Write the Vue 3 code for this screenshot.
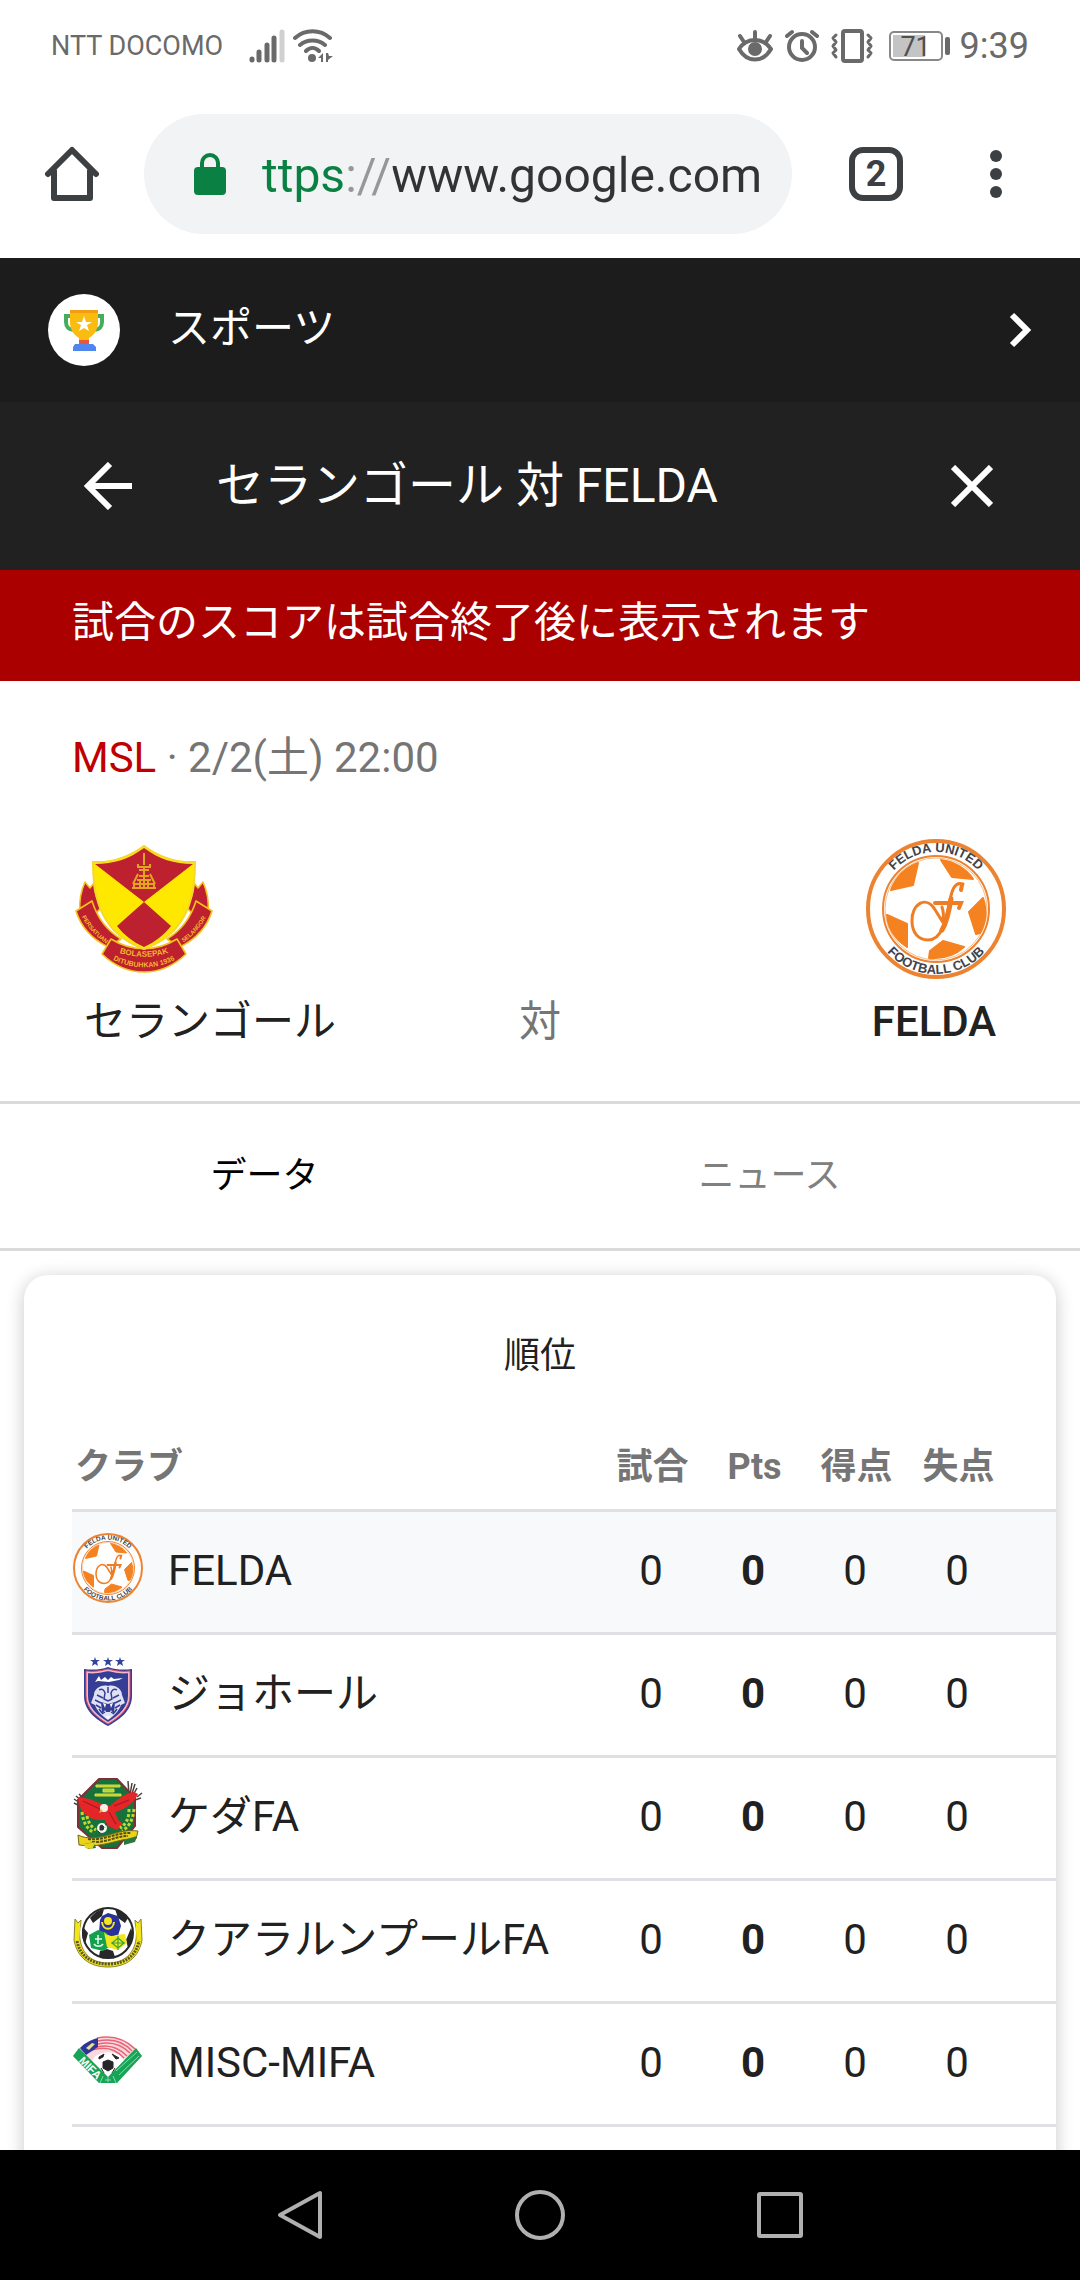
<script setup>
import { ref } from 'vue'

const url = ref('ttps://www.google.com')
const openTabs = ref(2)
const battery = ref(71)

// Tabs
const tabs = ['データ', 'ニュース']
const activeTab = ref('データ')

// Standings
const columns = ['試合', 'Pts', '得点', '失点']
const clubs = ref([
  { name: 'FELDA', crest: 'felda', stats: [0, 0, 0, 0] },
  { name: 'ジョホール', crest: 'johor', stats: [0, 0, 0, 0] },
  { name: 'ケダFA', crest: 'kedah', stats: [0, 0, 0, 0] },
  { name: 'クアラルンプールFA', crest: 'kl', stats: [0, 0, 0, 0] },
  { name: 'MISC-MIFA', crest: 'mifa', stats: [0, 0, 0, 0] }
])
</script>

<template>
  <div class="screen">
    <!-- crest drawings, used below by id -->
    <svg class="defs" aria-hidden="true">
      <symbol id="selangor" viewBox="0 0 144 144">
        <g fill="#bd202e" stroke="#f6c21c" stroke-width="1.6" stroke-linejoin="round">
          <path d="M13 45l5 6 4-5c0 9 3 17 8 24l-9 9-13-5c-1-10 1-20 5-29z" />
          <path d="M131 45l-5 6-4-5c0 9-3 17-8 24l9 9 13-5c1-10-1-20-5-29z" />
          <path d="M4 74l16-10c5 16 14 29 29 38l-13 8C20 102 9 90 4 74z" />
          <path d="M140 74l-16-10c-5 16-14 29-29 38l13 8c16-8 27-20 32-36z" />
          <path d="M39 102c21 13 45 13 66 0l9 15c-25 24-59 24-84 0z" />
        </g>
        <path d="M72 9C57 20 41 26 21 25c0 38 9 72 51 87 42-15 51-49 51-87-20 1-36-5-51-16z" fill="#ffe800" stroke="#f8d72c" stroke-width="2" />
        <path d="M72 11C57 22 42 27 23 27l49 38 49-38c-19 0-34-5-49-16z" fill="#bd202e" />
        <path d="M72 65L45 89c7 9 16 16 27 21 11-5 20-12 27-21z" fill="#bd202e" />
        <g fill="none" stroke="#e2a51f" stroke-width="2">
          <path d="M72 16v12M66 27v3h12v-3M67 33h10M66 37l-5 10M78 37l5 10M67 39h10M65 43h14M62 47h20" />
          <path d="M60 51h24M62 51v-4M68 44v7M76 44v7M72 30v20M82 51v-4" />
        </g>
        <g class="ribbon-text">
          <path id="rib-l" d="M8 76c6 13 15 24 30 33" fill="none" />
          <path id="rib-r" d="M106 109c15-9 24-20 31-34" fill="none" />
          <path id="rib-a" d="M40 113c20 9 44 9 64 0" fill="none" />
          <path id="rib-b" d="M31 116c23 19 59 19 82 0" fill="none" />
          <text font-size="6" text-anchor="middle"><textPath href="#rib-l" startOffset="50%">PERSATUAN</textPath></text>
          <text font-size="6" text-anchor="middle"><textPath href="#rib-r" startOffset="50%">SELANGOR</textPath></text>
          <text font-size="8" text-anchor="middle"><textPath href="#rib-a" startOffset="50%">BOLASEPAK</textPath></text>
          <text font-size="7" text-anchor="middle"><textPath href="#rib-b" startOffset="50%">DITUBUHKAN 1936</textPath></text>
        </g>
      </symbol>

      <symbol id="felda" viewBox="0 0 144 144">
        <circle cx="72" cy="72" r="68" fill="#fff" stroke="#ed8231" stroke-width="4" />
        <circle cx="72" cy="72" r="53" fill="none" stroke="#ed8231" stroke-width="2" />
        <circle cx="72" cy="72" r="51" fill="none" stroke="#f8bd8a" stroke-width="1" />
        <g fill="#f58220" stroke="#f58220" stroke-width="2" stroke-linejoin="round">
          <path d="M54 26l-5 22-22 5c5-13 14-22 27-27z" />
          <path d="M77 23l11 17 21 2c-7-10-18-17-32-19z" />
          <path d="M119 61l-14 14 7 22 4-1c6-11 7-23 3-35z" />
          <path d="M79 104l-13 10-1 7c13 1 25-2 35-11z" />
          <path d="M23 78l20 9v23C31 102 24 91 23 78z" />
        </g>
        <g fill="none" stroke="#ee7d23" stroke-linecap="round">
          <path d="M99 47c-8-3-11 6-13 16-4 21-8 40-22 40-10 0-16-8-16-19 0-17 13-25 22-13l8 13c2-4 2-8 0-14" stroke-width="3" />
          <path d="M98 48l-1 5M71 66h26l-2 5" stroke-width="4" />
          <path d="M87 62c-2 12-4 23-9 31" stroke-width="5" />
        </g>
        <path id="felda-top" d="M15 72a57 57 0 0 1 114 0" fill="none" />
        <path id="felda-bottom" d="M7 72a65 65 0 0 0 130 0" fill="none" />
        <g class="ring-text">
          <text><textPath href="#felda-top" startOffset="50%">FELDA UNITED</textPath></text>
          <text><textPath href="#felda-bottom" startOffset="50%">FOOTBALL CLUB</textPath></text>
        </g>
      </symbol>

      <symbol id="johor" viewBox="0 0 72 72">
        <g fill="#33429b">
          <path id="star" d="M23 2l1 3h4l-3 2 1 4-3-2-3 2 1-4-3-2h4z" />
          <use href="#star" x="13" />
          <use href="#star" x="25" />
        </g>
        <path d="M36 12c-8 3-16 3-24 2v27c0 14 11 23 24 30 13-7 24-16 24-30V14c-8 1-16 1-24-2z" fill="#353d94" />
        <path d="M36 15c-7 2-14 3-21 2v24c0 12 9 20 21 27 12-7 21-15 21-27V17c-7 1-14 0-21-2z" fill="#353d94" stroke="#f3b8c4" stroke-width="2" />
        <path d="M36 14c-7 2-15 3-22 2v25c0 12 10 21 22 28 12-7 22-16 22-28V16c-7 1-15 0-22-2z" fill="none" stroke="#dc4c6c" stroke-width="1" />
        <path d="M23 27l4-6 2 4 4-3 3 3 3-3 3 2 9-1-4 2-10 2-11-1z" fill="#fff" />
        <path d="M36 31c-7-2-14 3-14 9l-3 8 4 2c2 6 7 11 13 15 6-4 11-9 13-15l4-2-3-8c0-6-7-11-14-9z" fill="#dfe2f4" />
        <g fill="none" stroke="#353d94" stroke-width="1.5">
          <path d="M27 35c3-2 5 0 6 3l-1 6 4 2 4-2-1-6c1-3 3-5 6-3M25 40l6 3M47 40l-6 3M23 45l6 3M49 45l-6 3M24 50l5 3M48 50l-5 3M36 32v6M30 59l3-2M42 59l-3-2M27 54l3 4M45 54l-3 4" />
        </g>
        <path d="M29 47l7 2 7-2-1 12-3-4-1 2h-4l-1-2-3 4z" fill="#353d94" />
        <path d="M31 48l2 5 1-4zM41 48l-2 5-1-4zM33 61h6l-3 3z" fill="#fff" />
      </symbol>

      <symbol id="kedah" viewBox="0 0 72 72">
        <path d="M2 25l4 2M2 21l6 4M4 18l6 5M7 16l5 5M70 15l-5 4M65 10l-5 9M60 5l-2 12M56 3l1 14M69 20l-6 2M63 6l-4 13" stroke="#4b4141" stroke-width="1.5" />
        <path d="M27 1h18l18 19v28L45 70H30L6 49V22z" fill="#17713c" stroke="#7e3037" stroke-width="2" />
        <path d="M24 7h24v2H24zM31 11h11v3H31zM23 16h26v2H23z" fill="#b5d334" stroke="#d7dd3d" stroke-width="1" />
        <path d="M6 19l12 2 14 6 6 1c6-5 14-13 24-14l4 2c-4 9-12 15-23 18l3 8 5 4-6 6-9-4-3-6C18 43 7 36 6 19z" fill="#e52628" />
        <path d="M11 23l19 9M42 28l15-6M37 34l7 12" stroke="#a71822" stroke-width="1.2" />
        <circle cx="32" cy="30" r="4" fill="#f4f0e9" />
        <path d="M29 31l-2 4 4-2z" fill="#e6c538" />
        <g fill="none" stroke="#c2d82e" stroke-width="3" stroke-dasharray="3 2">
          <path d="M10 34c1 10 5 17 12 21M15 38c1 6 4 11 9 14M62 31c-1 11-5 18-12 22M57 31c0 10-3 15-9 19" />
        </g>
        <circle cx="30" cy="50" r="5" fill="#f4f4f4" />
        <path d="M28 48l2-1 2 2-1 3h-3zM26 53l2 2M33 47l2-1" fill="#333" stroke="#333" />
        <path d="M6 57c10 5 22 3 34-1 9-3 17-4 26-3l-2 8c-16-2-32 10-57 6z" fill="#ead31a" stroke="#756819" stroke-width="1" />
        <path d="M16 61c16 2 29-7 43-6M20 64c14 1 24-6 36-6" fill="none" stroke="#574d18" stroke-width="2" stroke-dasharray="3 1" />
        <path d="M52 62l13-4-2 6-11 3zM12 66l10-2 2 6-8 1z" fill="#28783f" />
        <path d="M12 66l12-2-4 7-7-1z" fill="#ead31a" />
      </symbol>

      <symbol id="kl" viewBox="0 0 72 72">
        <path d="M3 18l3 4 3-3-1 19c2 15 12 24 28 24s26-9 28-24l-1-19 3 3 3-4 1 21c-3 17-15 27-34 27S5 56 2 39z" fill="#f2e41d" stroke="#8c862a" stroke-width="1" />
        <path d="M5 40c3 15 14 23 31 23s28-8 31-23" fill="none" stroke="#5c5820" stroke-width="3" stroke-dasharray="2 1" />
        <circle cx="36" cy="32" r="28" fill="#fff" />
        <circle cx="36" cy="32" r="25" fill="#fff" stroke="#282828" stroke-width="2" />
        <path d="M18 17c4-5 8-8 14-9l-2 7-9 7zM43 8c6 1 10 5 13 9l-3 5-7-5zM11 26l5 6-3 11c-3-6-4-11-2-17zM59 27c3 7 1 14-3 20l-2-8zM28 50l7-2 6 2 2 6c-6 1-11 1-16-1z" fill="#282828" />
        <path d="M30 15l6-3 10 3 3 10-4 13-9-4-9-2 1-13z" fill="#28329a" />
        <path d="M17 34l9-5 9 3 5 12-9 6-12-3z" fill="#12a04e" />
        <path d="M32 31c3 4 7 5 12 3l9-1 2 9-9 7-11-3z" fill="#f1e71e" />
        <circle cx="36" cy="20" r="4" fill="#f4e51d" />
        <path d="M30 21c1 9 11 9 12 0" fill="none" stroke="#f4e51d" stroke-width="2" />
        <path d="M26 34v9M22 43c2 3 7 3 9 0M23 38h7" fill="none" stroke="#e7f7e9" stroke-width="1.5" />
        <path d="M46 37l6 5-6 5-6-5zM46 35v14M39 42h14" fill="none" stroke="#3ba33b" stroke-width="1.2" />
      </symbol>

      <symbol id="mifa" viewBox="0 0 72 72">
        <path d="M1 32c9-13 21-19 35-19s25 6 34 19L45 59H27z" fill="#f9d9dd" />
        <g fill="none" stroke="#e86476" stroke-width="1.5">
          <path d="M25 14c15-3 28 1 38 11M26 17c14-3 25 0 34 10M26 20c13-3 23 0 32 9M25 23c12-3 21 0 30 9M20 26c13-4 23-2 32 8" />
        </g>
        <path d="M8 24c5-5 10-8 18-10v9L14 31z" fill="#2d3696" />
        <path d="M14 24l6-5 3 1-6 6z" fill="#e9df8f" />
        <path d="M20 37c4-11 27-12 32 0L36 53z" fill="#fff" />
        <path d="M31 38l5-2 5 2v6l-5 3-5-3zM27 33l5-3-1 3-4 2zM40 30l7 4-3 1zM29 44l3 5M43 44l-3 5" fill="#262626" stroke="#262626" stroke-width="1" />
        <path d="M1 32l6-8 29 29 28-29 6 8-25 27H27z" fill="#16a457" />
        <path d="M31 52l-3 7M41 52l3 7M44 47l21-19M47 51l20-19M36 53v5M33 56h6" fill="none" stroke="#8ed8ad" stroke-width="1" />
        <path id="mifa-arc" d="M2 33l27 27" fill="none" />
        <text class="mifa-text"><textPath href="#mifa-arc" startOffset="50%">MIFA</textPath></text>
      </symbol>
    </svg>

    <header class="status-bar">
      <span class="carrier">NTT DOCOMO</span>
      <svg class="signal" width="36" height="34" viewBox="0 0 36 34">
        <g stroke="#6a6a6a" stroke-width="5" stroke-linecap="round">
          <path d="M3 30v1M10 23v8M18 16v15M25 9v22" />
          <path d="M33 3v28" stroke="#d0d0d0" />
        </g>
      </svg>
      <svg class="wifi" width="40" height="34" viewBox="0 0 40 34">
        <g fill="none" stroke="#6a6a6a" stroke-width="4" stroke-linecap="round">
          <path d="M2 9c10-9 25-9 35 0M7 16c7-6 18-6 25 0M13 22c4-4 9-4 13 0" />
        </g>
        <circle cx="19" cy="29" r="4" fill="#6a6a6a" />
        <path d="M30 24v9h-2v-4h-3zM33 24h2l1 3h4l-5 4v2h-2z" fill="#6a6a6a" />
      </svg>

      <div class="status-icons">
        <svg width="36" height="34" viewBox="0 0 36 34" fill="none" stroke="#6a6a6a" stroke-width="4" stroke-linecap="round">
          <path d="M2 20c8-12 24-12 32 0-8 14-24 14-32 0zM18 3v6M3 7l4 6M33 7l-4 6" />
          <circle cx="18" cy="20" r="5" fill="#6a6a6a" />
        </svg>
        <svg width="34" height="34" viewBox="0 0 34 34" fill="none" stroke="#6a6a6a" stroke-width="4" stroke-linecap="round">
          <circle cx="17" cy="18" r="13" />
          <path d="M17 12v7l5 5M2 7l5-4M32 7l-5-4" />
        </svg>
        <svg width="42" height="34" viewBox="0 0 42 34" fill="none" stroke="#6a6a6a" stroke-width="3" stroke-linejoin="round" stroke-linecap="round">
          <rect x="12" y="2" width="19" height="30" rx="2" stroke-width="4" />
          <path d="M5 6L2 9l3 4-3 4 3 4-3 3 3 4M37 6l3 3-3 4 3 4-3 4 3 3-3 4" />
        </svg>
        <div class="battery">
          <div class="battery-body">
            <div class="battery-fill" :style="{ width: battery + '%' }"></div>
            <span>{{ battery }}</span>
          </div>
          <i class="battery-nub"></i>
        </div>
        <time class="clock">9:39</time>
      </div>
    </header>

    <div class="toolbar">
      <button class="icon-btn" aria-label="ホーム">
        <svg width="56" height="56" viewBox="0 0 56 56" fill="none" stroke="#3c4043" stroke-width="6" stroke-linecap="round" stroke-linejoin="round">
          <path d="M4 28L28 4l24 24M10 25v27h36V25" />
        </svg>
      </button>
      <label class="address">
        <svg width="32" height="42" viewBox="0 0 32 42">
          <rect y="14" width="32" height="28" rx="4" fill="#0b8043" />
          <path d="M8 16v-6a8 8 0 0 1 16 0v6" fill="none" stroke="#0b8043" stroke-width="4" />
        </svg>
        <input v-model="url" type="text" aria-label="URL">
      </label>
      <button class="icon-btn" aria-label="タブ">
        <span class="tab-count">{{ openTabs }}</span>
      </button>
      <button class="icon-btn" aria-label="メニュー">
        <svg width="12" height="48" viewBox="0 0 12 48" fill="#3c4043">
          <circle cx="6" cy="6" r="6" />
          <circle cx="6" cy="24" r="6" />
          <circle cx="6" cy="42" r="6" />
        </svg>
      </button>
    </div>

    <main>
      <a class="sports" href="#">
        <svg width="72" height="72" viewBox="0 0 72 72">
          <circle cx="36" cy="36" r="36" fill="#fff" />
          <path d="M23 22h-5v6c0 5 3 8 8 8M49 22h5v6c0 5-3 8-8 8" fill="none" stroke="#46ac5f" stroke-width="4" />
          <path d="M22 16h28v12c0 8-4 13-9 16v4H31v-4c-5-3-9-8-9-16z" fill="#fbbc10" />
          <path d="M22 16h28v3H22z" fill="#f29d16" />
          <path d="M31 46h10v4H31z" fill="#e8573c" />
          <path d="M27 50h18l3 3v4H25v-4z" fill="#4f87ee" />
          <path d="M36 22l2 6h6l-5 3 2 6-5-3-5 3 2-6-5-3h6z" fill="#fff" />
        </svg>
        <span>スポーツ</span>
        <svg class="chevron" width="24" height="36" viewBox="0 0 24 36">
          <path d="M4 3l15 15L4 33" fill="none" stroke="#fff" stroke-width="6" />
        </svg>
      </a>

      <div class="title-bar">
        <button class="icon-btn" aria-label="戻る">
          <svg width="48" height="48" viewBox="0 0 48 48" fill="none" stroke="#fff" stroke-width="6">
            <path d="M26 2L4 24l22 22M4 24h44" />
          </svg>
        </button>
        <h1>セランゴール 対 FELDA</h1>
        <button class="icon-btn" aria-label="閉じる">
          <svg width="42" height="42" viewBox="0 0 42 42" stroke="#fff" stroke-width="6">
            <path d="M2 2l38 38M40 2L2 40" />
          </svg>
        </button>
      </div>

      <p class="notice">試合のスコアは試合終了後に表示されます</p>

      <section class="match">
        <p class="meta"><span class="league">MSL</span> · 2/2(土) 22:00</p>
        <div class="teams">
          <div class="team">
            <svg class="crest-lg"><use href="#selangor" /></svg>
            <span class="home-name">セランゴール</span>
          </div>
          <span class="versus">対</span>
          <div class="team away">
            <svg class="crest-lg"><use href="#felda" /></svg>
            <span class="away-name">FELDA</span>
          </div>
        </div>
      </section>

      <nav class="tabs">
        <button
          v-for="tab in tabs"
          :key="tab"
          :class="{ active: tab === activeTab }"
          @click="activeTab = tab"
        >
          {{ tab }}
        </button>
      </nav>

      <section class="card">
        <h2>順位</h2>
        <table>
          <colgroup>
            <col>
            <col class="stat-col">
            <col class="stat-col">
            <col class="stat-col">
            <col class="last-col">
          </colgroup>
          <thead>
            <tr>
              <th class="club">クラブ</th>
              <th v-for="column in columns" :key="column">{{ column }}</th>
            </tr>
          </thead>
          <tbody>
            <tr
              v-for="club in clubs"
              :key="club.name"
              :class="{ current: club.name === 'FELDA' }"
            >
              <td class="club">
                <div class="club-cell">
                  <svg class="crest-sm"><use :href="'#' + club.crest" /></svg>
                  <span>{{ club.name }}</span>
                </div>
              </td>
              <td v-for="(stat, i) in club.stats" :key="i" :class="{ points: i === 1 }">{{ stat }}</td>
            </tr>
          </tbody>
        </table>
      </section>
    </main>

    <footer class="nav-bar">
      <button class="nav-btn" aria-label="戻る">
        <svg width="52" height="52" viewBox="0 0 52 52"><path d="M46 4v44L6 26z" /></svg>
      </button>
      <button class="nav-btn" aria-label="ホーム">
        <svg width="52" height="52" viewBox="0 0 52 52"><circle cx="26" cy="26" r="23" /></svg>
      </button>
      <button class="nav-btn" aria-label="履歴">
        <svg width="52" height="52" viewBox="0 0 52 52"><rect x="5" y="5" width="42" height="42" rx="1" /></svg>
      </button>
    </footer>
  </div>
</template>

<style>
body {
  margin: 0;
  background: #fff;
}
</style>

<style scoped>
.screen {
  display: flex;
  flex-direction: column;
  height: 100vh;
  font-family: Roboto, "Noto Sans CJK JP", sans-serif;
  font-size: 42px;
  line-height: 54px;
  color: #212121;
  background: #fff;
}

.defs {
  position: absolute;
  width: 0;
  height: 0;
}

svg { display: block; flex-shrink: 0; }

h1, h2, p { margin: 0; font-weight: 400; }

button {
  padding: 0;
  border: none;
  background: none;
  font: inherit;
  color: inherit;
  cursor: pointer;
}

.icon-btn {
  display: flex;
  align-items: center;
  justify-content: center;
  flex-shrink: 0;
  width: 72px;
  height: 72px;
}

/* Status bar */
.status-bar {
  display: flex;
  align-items: center;
  flex-shrink: 0;
  box-sizing: border-box;
  height: 90px;
  padding: 2px 51px 0;
  color: #6a6a6a;
}

.carrier { font-size: 27px; }

.signal { margin-left: 26px; }

.wifi { margin-left: 8px; }

.status-icons {
  display: flex;
  align-items: center;
  gap: 12px;
  margin-left: auto;
}

.battery {
  display: flex;
  align-items: center;
  gap: 2px;
  margin: 0 -2px 0 4px;
}

.battery-body {
  position: relative;
  box-sizing: border-box;
  width: 54px;
  height: 30px;
  padding: 2px;
  border: 2px solid #888;
  border-radius: 5px;
}

.battery-fill {
  height: 100%;
  background: #c4c4c4;
}

.battery-body span {
  position: absolute;
  inset: 0;
  font-size: 27px;
  line-height: 28px;
  text-align: center;
  color: #505050;
}

.battery-nub {
  width: 5px;
  height: 18px;
  border-radius: 2px;
  background: #6a6a6a;
}

.clock { font-size: 36px; }

/* Browser toolbar */
.toolbar {
  display: flex;
  align-items: center;
  flex-shrink: 0;
  gap: 48px;
  height: 168px;
  padding: 0 48px 0 36px;
}

.address {
  display: flex;
  align-items: center;
  flex: 1;
  gap: 36px;
  min-width: 0;
  height: 120px;
  box-sizing: border-box;
  margin-left: -12px;
  padding: 0 24px 0 50px;
  border-radius: 60px;
  background: #f1f3f4;
}

/* scheme in green, slashes in grey, host in black */
.address input {
  flex: 1;
  min-width: 0;
  height: 72px;
  padding: 2px 0 0;
  border: none;
  outline: none;
  font: inherit;
  font-size: 48px;
  background: linear-gradient(90deg, #0b8043 84px, #979797 84px, #979797 131px, #333 131px);
  background-clip: text;
  -webkit-background-clip: text;
  color: transparent;
}

.tab-count {
  box-sizing: border-box;
  width: 54px;
  height: 54px;
  border: 6px solid #3c4043;
  border-radius: 14px;
  font-size: 36px;
  font-weight: 700;
  line-height: 42px;
  color: #3c4043;
}

main {
  flex: 1;
  min-height: 0;
  overflow: hidden;
}

/* Headers */
.sports {
  display: flex;
  align-items: center;
  gap: 48px;
  height: 144px;
  padding: 0 48px;
  color: #fff;
  text-decoration: none;
  background: #1c1c1c;
}

.sports span { padding-bottom: 3px; }

.chevron { margin-left: auto; }

.title-bar {
  display: flex;
  align-items: center;
  gap: 72px;
  height: 168px;
  padding: 0 72px;
  color: #fff;
  background: #212121;
}

.title-bar h1 {
  flex: 1;
  font-size: 48px;
}

.notice {
  padding: 26px 72px 31px;
  color: #fff;
  background: #ab0000;
}

/* Match */
.match {
  padding: 50px 72px 52px;
  border-bottom: 3px solid #dadada;
}

.meta { color: #757575; }

.league { color: #c00000; }

.teams {
  display: grid;
  grid-template-columns: 1fr auto 1fr;
  align-items: end;
  margin-top: 52px;
}

.team {
  display: flex;
  flex-direction: column;
  gap: 14px;
}

.away {
  justify-self: end;
  text-align: center;
}

.crest-lg {
  width: 144px;
  height: 144px;
}

.home-name { padding-left: 12px; }

.away-name {
  padding-right: 4px;
  font-weight: 500;
}

.versus { color: #757575; }

/* Tabs */
.tabs {
  display: grid;
  grid-template-columns: 11fr 10fr;
  padding-right: 70px;
  border-bottom: 3px solid #dadada;
}

.tabs button {
  height: 144px;
  font-size: 36px;
  color: #808080;
}

.tabs .active { color: #000; }

/* Standings */
.card {
  min-height: 100%;
  margin: 24px 24px 0;
  padding: 54px 0 0 48px;
  box-sizing: border-box;
  border-radius: 24px;
  background: #fff;
  box-shadow: 0 3px 18px rgba(0, 0, 0, 0.22);
}

.card h2 {
  margin-right: 48px;
  font-size: 36px;
  text-align: center;
}

table {
  width: 100%;
  margin-top: 36px;
  table-layout: fixed;
  border-spacing: 0;
}

.stat-col { width: 102px; }

.last-col { width: 150px; }

th, td {
  box-sizing: border-box;
  padding: 0;
  border-bottom: 3px solid #dfe0e4;
  text-align: center;
}

th {
  height: 93px;
  padding: 5px 0 0 3px;
  font-size: 36px;
  font-weight: 700;
  color: #757575;
}

td {
  height: 123px;
  padding-bottom: 2px;
}

th:last-child, td:last-child { padding-right: 48px; }

.club { text-align: left; }

.current td { background: #f8f9fb; }

.club-cell {
  display: flex;
  align-items: center;
  gap: 24px;
}

.crest-sm {
  width: 72px;
  height: 72px;
  margin-bottom: 6px;
}

.points { font-weight: 700; }

/* Android navigation */
.nav-bar {
  display: flex;
  align-items: center;
  justify-content: center;
  flex-shrink: 0;
  gap: 144px;
  height: 130px;
  background: #000;
}

.nav-btn {
  display: flex;
  align-items: center;
  justify-content: center;
  width: 96px;
  height: 96px;
}

.nav-btn svg {
  fill: none;
  stroke: #b0b0b0;
  stroke-width: 4;
  stroke-linejoin: round;
}

/* Crest lettering */
.ribbon-text {
  font-family: "Liberation Sans", Arial, sans-serif;
  font-weight: 700;
  fill: #f3b72c;
}

.ring-text {
  font: 700 13px "Liberation Sans", Arial, sans-serif;
  fill: #41434a;
  text-anchor: middle;
}

.mifa-text {
  font: 700 11px "Liberation Sans", Arial, sans-serif;
  fill: #fff;
  text-anchor: middle;
}
</style>
